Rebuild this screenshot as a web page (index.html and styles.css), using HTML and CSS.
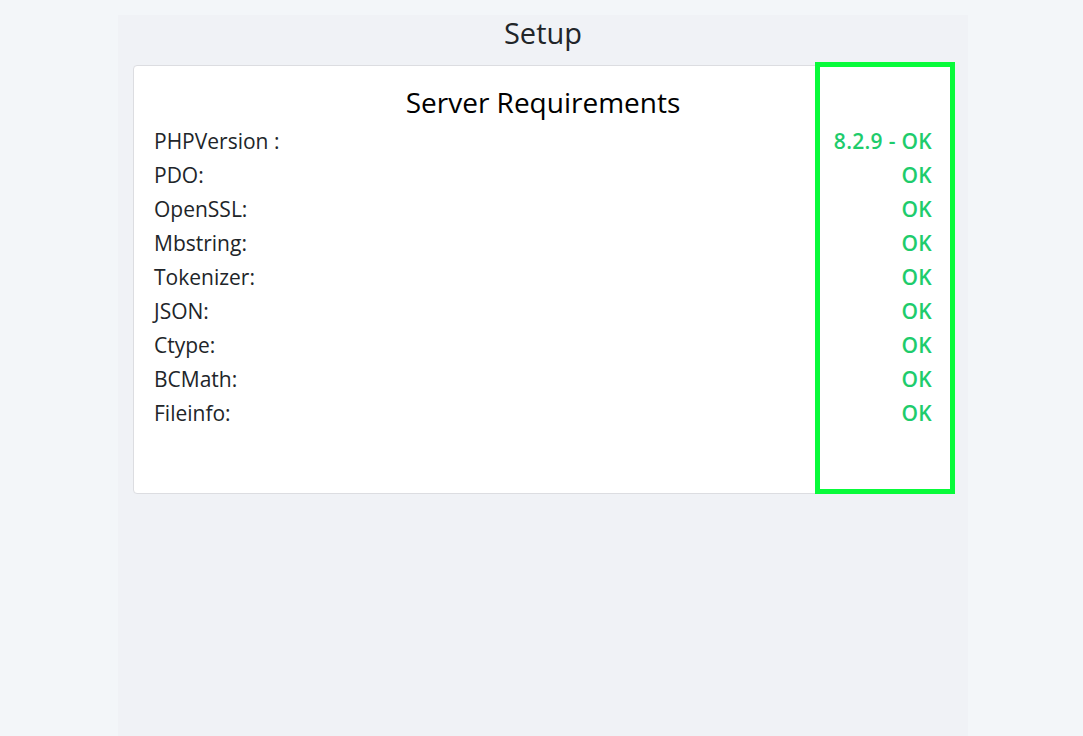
FILE: index.html
```html
<!DOCTYPE html>
<html lang="en">
<head>
<meta charset="utf-8">
<title>Setup</title>
<link rel="stylesheet" href="styles.css">
</head>
<body>
<div class="page">
  <h1 class="page-title">Setup</h1>
  <div class="card">
    <h2 class="card-title">Server Requirements</h2>
    <div class="req-list">
      <div class="req-row"><span class="req-label">PHPVersion :</span><span class="req-status">8.2.9 - OK</span></div>
      <div class="req-row"><span class="req-label">PDO:</span><span class="req-status">OK</span></div>
      <div class="req-row"><span class="req-label">OpenSSL:</span><span class="req-status">OK</span></div>
      <div class="req-row"><span class="req-label">Mbstring:</span><span class="req-status">OK</span></div>
      <div class="req-row"><span class="req-label">Tokenizer:</span><span class="req-status">OK</span></div>
      <div class="req-row"><span class="req-label">JSON:</span><span class="req-status">OK</span></div>
      <div class="req-row"><span class="req-label">Ctype:</span><span class="req-status">OK</span></div>
      <div class="req-row"><span class="req-label">BCMath:</span><span class="req-status">OK</span></div>
      <div class="req-row"><span class="req-label">Fileinfo:</span><span class="req-status">OK</span></div>
    </div>
    <div class="highlight"></div>
  </div>
</div>
</body>
</html>
```

FILE: styles.css
```css
html, body {
  margin: 0;
  padding: 0;
}
body {
  background: #f3f6f9;
  font-family: "Open Sans", "Noto Sans", sans-serif;
  color: #212529;
}
.page {
  width: 820px;
  margin: 15px 0 0 118px;
  padding: 0 15px;
  min-height: 721px;
  background: #f0f2f6;
}
.page-title {
  margin: 0;
  font-size: 29px;
  line-height: 36px;
  font-weight: 400;
  text-align: center;
  color: #212529;
}
.card {
  position: relative;
  margin-top: 14px;
  background: #ffffff;
  border: 1px solid #dcdde1;
  border-radius: 4px;
  padding: 19px 20px 0;
  box-sizing: border-box;
  height: 429px;
}
.card-title {
  margin: 0 0 5px;
  font-size: 28px;
  line-height: 34px;
  font-weight: 400;
  text-align: center;
  color: #000000;
}
.req-list {
  display: flex;
  flex-direction: column;
}
.req-row {
  display: flex;
  justify-content: space-between;
  font-size: 21px;
  line-height: 34px;
}
.req-status {
  color: #1ecc6c;
  font-weight: 600;
  letter-spacing: 0.3px;
}
.highlight {
  position: absolute;
  top: -4px;
  right: -3px;
  bottom: -1px;
  width: 140px;
  box-sizing: border-box;
  border: 5px solid #08fb3a;
  pointer-events: none;
}
```
